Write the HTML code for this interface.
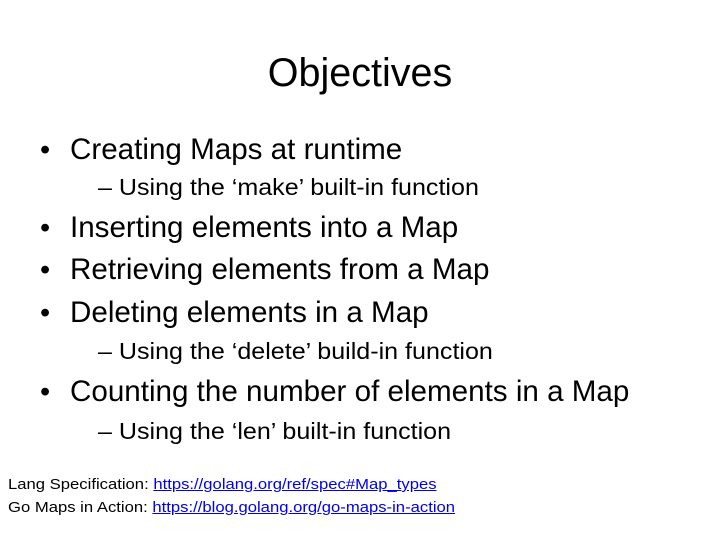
<!DOCTYPE html>
<html><head><meta charset="utf-8"><style>
body{margin:0;width:720px;height:540px;background:#fff;position:relative;overflow:hidden;font-family:"Liberation Sans",Arial,sans-serif;color:#000}
div{position:absolute;white-space:nowrap}
.t{left:0;width:720px;text-align:center;font-size:39.5px;top:50px;line-height:46px}
.m{left:70px;font-size:29.6px;line-height:34px}
.b{left:40px;font-size:29px;line-height:34px}
.s{left:98px;font-size:23px;line-height:26px;transform:scaleX(1.09);transform-origin:left}
.f{left:8px;font-size:15px;line-height:18px;transform:scaleX(1.11);transform-origin:left}
a{color:#0000ee;text-decoration:underline}
</style></head><body>
<div class="t">Objectives</div>
<div class="b" style="top:133px">•</div><div class="m" style="top:133px">Creating Maps at runtime</div>
<div class="s" style="top:174px">– Using the ‘make’ built-in function</div>
<div class="b" style="top:211px">•</div><div class="m" style="top:211px">Inserting elements into a Map</div>
<div class="b" style="top:253px">•</div><div class="m" style="top:253px">Retrieving elements from a Map</div>
<div class="b" style="top:296px">•</div><div class="m" style="top:296px">Deleting elements in a Map</div>
<div class="s" style="top:338px">– Using the ‘delete’ build-in function</div>
<div class="b" style="top:375px">•</div><div class="m" style="top:375px">Counting the number of elements in a Map</div>
<div class="s" style="top:418px">– Using the ‘len’ built-in function</div>
<div class="f" style="top:476px">Lang Specification: <a>https://golang.org/ref/spec#Map_types</a></div>
<div class="f" style="top:499px">Go Maps in Action: <a>https://blog.golang.org/go-maps-in-action</a></div>
</body></html>
